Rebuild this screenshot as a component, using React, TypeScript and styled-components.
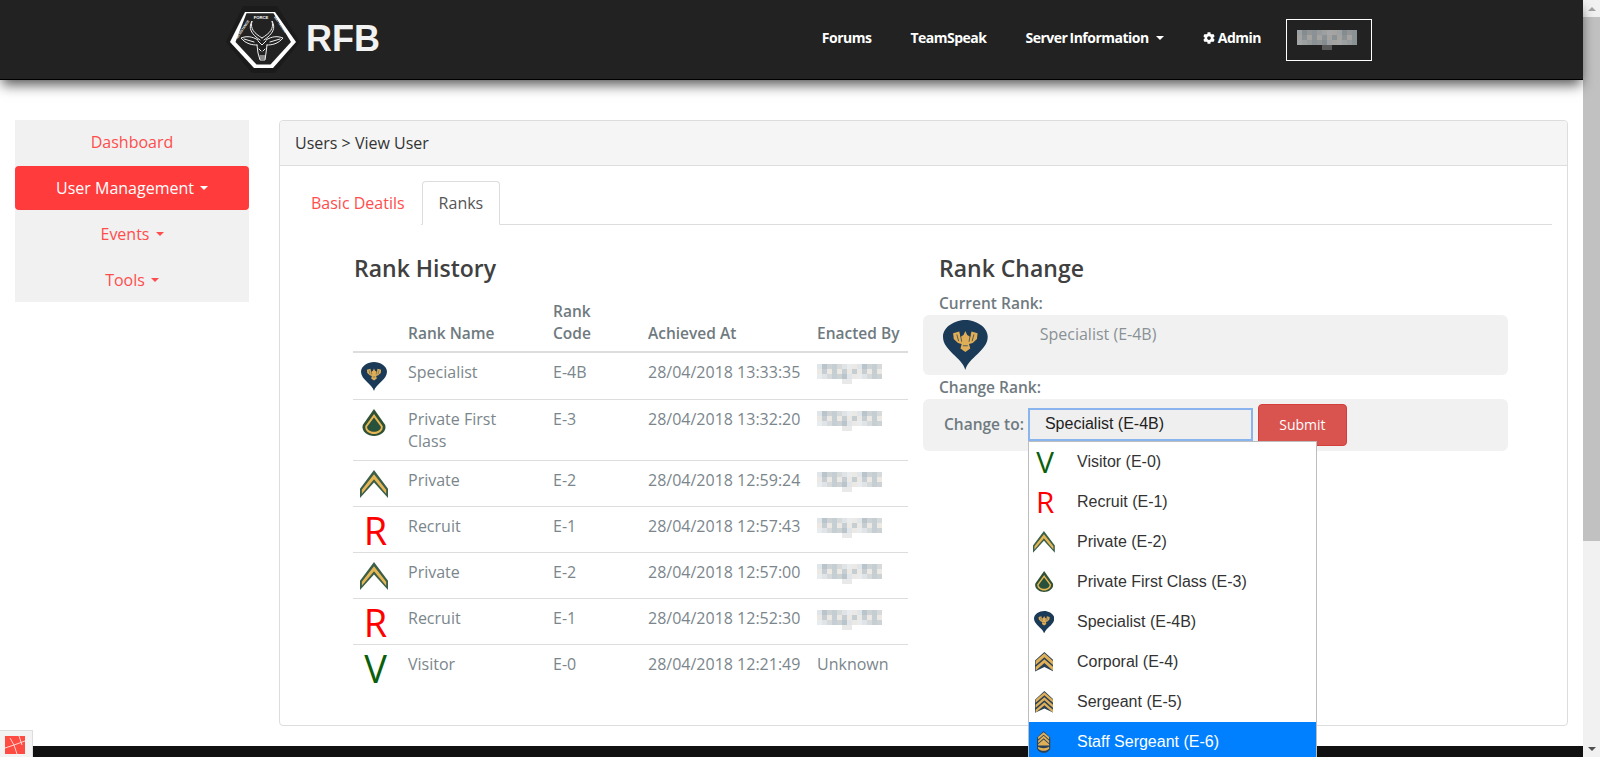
import React from 'react';
import styled, { createGlobalStyle } from 'styled-components';
import { FaCog } from 'react-icons/fa';

const GlobalStyle = createGlobalStyle`
  html, body {
    margin: 0;
    height: 757px;
    overflow: hidden;
    background: #fff;
  }

  * {
    box-sizing: border-box;
  }

  body {
    font-family: 'Open Sans', sans-serif;
    font-size: 15px;
    line-height: 22px;
    color: #333;
  }
`;

const Shell = styled.div`
  display: flex;
  height: 757px;
  overflow: hidden;
`;

const Page = styled.div`
  flex: 1;
  min-width: 0;
  display: flex;
  flex-direction: column;
`;

const Scrollbar = styled.div`
  flex: 0 0 17px;
  display: flex;
  flex-direction: column;
  align-items: center;
  background: #f1f1f1;
`;

const ScrollArrow = styled.div<{ $down?: boolean }>`
  flex: 0 0 17px;
  width: 17px;
  display: flex;
  align-items: center;
  justify-content: center;

  &::before {
    content: '';
    border-left: 4px solid transparent;
    border-right: 4px solid transparent;
    ${(p) => (p.$down ? 'border-top: 4px solid #505050;' : 'border-bottom: 4px solid #a3a3a3;')}
  }
`;

const ScrollThumb = styled.div`
  flex: 0 0 524px;
  width: 17px;
  background: #c1c1c1;
`;

const ScrollTrack = styled.div`
  flex: 1;
`;

const Navbar = styled.header`
  flex: 0 0 80px;
  display: flex;
  align-items: center;
  padding-left: 222px;
  padding-right: 211px;
  background: #222;
  border-bottom: 1px solid #000;
  box-shadow: 0 7px 12px -2px rgba(0, 0, 0, 0.65);
  position: relative;
  z-index: 2;
`;

const Brand = styled.a`
  display: flex;
  align-items: center;
  gap: 2px;
  font-family: 'Liberation Sans', Arial, sans-serif;
  font-size: 36px;
  font-weight: 700;
  color: #f2f2f2;
`;

const BrandName = styled.span`
  margin-top: -2px;
`;

const NavLinks = styled.nav`
  margin-left: auto;
  display: flex;
  align-items: center;
`;

const NavLink = styled.a`
  display: flex;
  align-items: center;
  gap: 3px;
  margin-left: 39px;
  padding-bottom: 3px;
  font-size: 14px;
  font-weight: 700;
  letter-spacing: -0.5px;
  word-spacing: -1px;
  color: #fff;
  white-space: nowrap;
`;

const NavCaret = styled.span`
  margin-left: 4px;
  border-left: 4px solid transparent;
  border-right: 4px solid transparent;
  border-top: 4px solid currentColor;
`;

const UserBox = styled.div`
  margin-left: 25px;
  width: 86px;
  height: 42px;
  padding-right: 4px;
  display: flex;
  align-items: center;
  justify-content: center;
  border: 1px solid #fff;
`;

const Content = styled.main`
  flex: 0 0 auto;
  display: flex;
  align-items: flex-start;
  gap: 30px;
  padding: 40px 15px 20px;
`;

const Sidebar = styled.aside`
  flex: 0 0 234px;
  height: 182px;
  background: #f1f1f1;
`;

const SideItem = styled.a<{ $active?: boolean; $first?: boolean }>`
  display: flex;
  align-items: center;
  justify-content: center;
  gap: 2px;
  height: ${(p) => (p.$active ? '44px' : '46px')};
  margin: ${(p) => (p.$active ? '0 0 1px' : '0')};
  padding-bottom: ${(p) => (p.$first ? '2px' : '0')};
  border-radius: 4px;
  font-size: 16px;
  color: ${(p) => (p.$active ? '#fff' : '#ff4d4d')};
  background: ${(p) => (p.$active ? '#ff3b3b' : 'transparent')};
`;

const Panel = styled.section`
  flex: 1;
  height: 606px;
  border: 1px solid #ddd;
  border-radius: 4px;
  background: #fff;
`;

const PanelHeader = styled.div`
  height: 45px;
  padding: 0 15px;
  display: flex;
  align-items: center;
  font-size: 16px;
  background: #f5f5f5;
  border-bottom: 1px solid #ddd;
  border-radius: 4px 4px 0 0;
`;

const PanelBody = styled.div`
  padding: 15px;
`;

const Tabs = styled.div`
  display: flex;
  height: 44px;
  border-bottom: 1px solid #ddd;
`;

const Tab = styled.a<{ $active?: boolean }>`
  height: 44px;
  padding: 0 ${(p) => (p.$active ? '16px' : '15px')};
  display: flex;
  align-items: center;
  font-size: 16px;
  color: ${(p) => (p.$active ? '#555' : '#ff4d4d')};
  border: 1px solid ${(p) => (p.$active ? '#ddd' : 'transparent')};
  border-bottom-color: ${(p) => (p.$active ? '#fff' : 'transparent')};
  border-radius: 4px 4px 0 0;
  background: #fff;
  margin-right: 1px;
`;

const Columns = styled.div`
  display: flex;
  align-items: flex-start;
  padding: 21px 0 0 58px;
`;

const LeftColumn = styled.div`
  flex: 0 0 555px;
`;

const RightColumn = styled.div`
  flex: 0 0 585px;
  margin-left: 15px;
  position: relative;
`;

const Heading = styled.h3<{ $inset?: boolean }>`
  margin: 0;
  height: ${(p) => (p.$inset ? '45px' : '44px')};
  padding-left: ${(p) => (p.$inset ? '16px' : '1px')};
  font-size: 23px;
  line-height: 44px;
  font-weight: 600;
  color: #404040;
`;

const RankTable = styled.table`
  width: 555px;
  border-collapse: collapse;
  table-layout: fixed;
  margin-top: 2px;

  tbody tr:first-child td {
    height: 47px;
  }
`;

const Th = styled.th<{ $w: number }>`
  width: ${(p) => p.$w}px;
  padding: 8px 0 7px;
  text-align: left;
  vertical-align: bottom;
  font-size: 15.5px;
  font-weight: 600;
  color: #6f7a80;
  border-bottom: 2px solid #ddd;
`;

const Td = styled.td`
  height: 46px;
  padding: 8px 0;
  vertical-align: top;
  font-size: 16px;
  color: #7b868c;
  border-top: 1px solid #ddd;
  white-space: nowrap;
`;

const WrapTd = styled(Td)`
  white-space: normal;
  padding-right: 30px;
`;

const IconTd = styled(Td)`
  padding: 3px 0 0;
`;

const IconSlot = styled.div`
  width: 42px;
  height: 40px;
  display: flex;
  align-items: center;
  justify-content: center;
`;

const BlurSlot = styled.div`
  padding-top: 3px;
  display: flex;
`;

const Label = styled.div`
  padding-left: 16px;
  font-size: 15.5px;
  font-weight: 600;
  line-height: 24px;
  color: #6f7a80;
`;

const CurrentBox = styled.div`
  height: 60px;
  display: flex;
  align-items: flex-start;
  padding: 5px 0 0 20px;
  background: #f1f1f1;
  border-radius: 6px;
`;

const CurrentName = styled.div`
  margin-left: 52px;
  margin-top: 3px;
  font-size: 16px;
  color: #8a9196;
`;

const ChangeBox = styled.div`
  height: 52px;
  display: flex;
  align-items: center;
  padding: 0 0 2px 21px;
  background: #f1f1f1;
  border-radius: 6px;
`;

const ChangeLabel = styled.div`
  font-size: 15.5px;
  font-weight: 600;
  color: #6f7a80;
  white-space: nowrap;
`;

const SelectBox = styled.div`
  width: 225px;
  height: 33px;
  margin-left: 4px;
  padding-left: 15px;
  display: flex;
  align-items: center;
  font-family: 'Liberation Sans', Arial, sans-serif;
  font-size: 16px;
  color: #222;
  background: #efefef;
  border: 2px solid #8ab4ee;
`;

const SubmitButton = styled.button`
  width: 89px;
  height: 42px;
  margin: 2px 0 0 5px;
  padding: 0 0 2px;
  font-family: 'Open Sans', sans-serif;
  font-size: 14px;
  color: #fff;
  background: #d9534f;
  border: 1px solid #d43f3a;
  border-radius: 4px;
`;

const Dropdown = styled.ul`
  position: absolute;
  left: 105px;
  top: 195px;
  width: 289px;
  height: 331px;
  margin: 0;
  padding: 0;
  list-style: none;
  overflow: hidden;
  background: #fff;
  border: 1px solid #bdbdbd;
  border-bottom: 0;
  z-index: 3;
`;

const Option = styled.li<{ $selected?: boolean }>`
  height: 40px;
  display: flex;
  align-items: center;
  padding-left: 1px;
  font-family: 'Liberation Sans', Arial, sans-serif;
  font-size: 16px;
  color: ${(p) => (p.$selected ? '#fff' : '#333')};
  background: ${(p) => (p.$selected ? '#0080ff' : 'transparent')};
`;

const OptionIcon = styled.div`
  flex: 0 0 47px;
  height: 34px;
  display: flex;
  align-items: center;
  justify-content: center;
  padding-right: 19px;
`;

const Footer = styled.footer`
  flex: 1;
  background: #111;
`;

const LaravelBadge = styled.div`
  position: fixed;
  left: 0;
  bottom: 0;
  width: 33px;
  height: 27px;
  padding: 4px 0 0 5px;
  background: #f3f3f3;
  border-top: 1px solid #ddd;
  border-right: 1px solid #ddd;
  z-index: 4;
`;

const Letter = styled.span<{ $color: string; $size: number; $nudge: number }>`
  margin-left: ${(p) => p.$nudge}px;
  font-family: 'Open Sans', sans-serif;
  font-size: ${(p) => p.$size}px;
  line-height: 1;
  color: ${(p) => p.$color};
`;

type RankKind = 'V' | 'R' | 'E2' | 'E3' | 'E4B' | 'E4' | 'E5' | 'E6';

const chevron = (y: number, h = 10) =>
  `M1 ${y + 12} L15 ${y} L29 ${y + 12} V${y + 12 + h} L15 ${y + h} L1 ${y + 12 + h} Z`;

// size of each badge at scale 1 (the table), and the part of the 30x36 box it fills
const badgeBox: Record<string, { w: number; h: number; view: string }> = {
  E2: { w: 28, h: 28, view: '0 6 30 27' },
  E3: { w: 26, h: 27, view: '0 1 30 32' },
  E4B: { w: 26, h: 29, view: '0 0 30 36' },
  E4: { w: 24, h: 25, view: '0 3 30 30' },
  E5: { w: 24, h: 28, view: '0 0 30 35' },
  E6: { w: 17, h: 28, view: '3 0 24 36' },
};

const Badge: React.FC<{ kind: RankKind; scale: number }> = ({ kind, scale }) => {
  if (kind === 'V') return <Letter $color="#0b5f0b" $size={38 * scale} $nudge={3 * scale}>V</Letter>;
  if (kind === 'R') return <Letter $color="#ff0000" $size={38 * scale} $nudge={3 * scale}>R</Letter>;

  const box = badgeBox[kind];
  const svgProps = {
    width: box.w * scale,
    height: box.h * scale,
    viewBox: box.view,
    preserveAspectRatio: 'none',
  };

  if (kind === 'E3') {
    return (
      <svg {...svgProps}>
        <path d="M15 1 L28 20 C30 28 22 33 15 33 C8 33 0 28 2 20 Z" fill="#2f5136" />
        <path d="M15 7 L25 21 C26 27 20 30.5 15 30.5 C10 30.5 4 27 5 21 Z" fill="#e8b755" />
        <path d="M15 11 L23 22 C23 26 19 28 15 28 C11 28 7 26 7 22 Z" fill="#27513a" />
      </svg>
    );
  }

  if (kind === 'E4B') {
    return (
      <svg {...svgProps}>
        <path d="M15 36 C13 27 0 22 0 12 C0 5 8 0 15 0 C22 0 30 5 30 12 C30 22 17 27 15 36 Z" fill="#1b3a57" />
        <g transform="translate(15 3) scale(.82) translate(-15 0)">
          <path d="M15 6 L16.5 9.5 L19 11 L20 6.5 L25 8 L24.5 13 L21 16.5 L18 17.5 L19 21.5 L15 24.5 L11 21.5 L12 17.5 L9 16.5 L5.5 13 L5 8 L10 6.5 L11 11 L13.5 9.5 Z" fill="#dfae57" />
          <path d="M8 9 L9.5 15 M11 9.5 L12 15.5 M22 9 L20.5 15 M19 9.5 L18 15.5 M13 19 H17" stroke="#1b3a57" strokeWidth="0.6" fill="none" />
        </g>
      </svg>
    );
  }

  if (kind === 'E2') {
    return (
      <svg {...svgProps}>
        <path d="M15 6 L30 24 V33 L15 18 L0 33 V24 Z" fill="#3c5f49" />
        <path d="M15 10 L28 25 V29 L15 15 L2 29 V25 Z" fill="#e8b755" />
      </svg>
    );
  }

  if (kind === 'E6') {
    return (
      <svg {...svgProps}>
        <path d="M15 0 L27 11 V28 C27 32 21 36 15 36 C9 36 3 32 3 28 V11 Z" fill="#2b4156" />
        <path d="M5 10 L15 2 L25 10 V14 L15 6 L5 14 Z M5 16 L15 8 L25 16 V20 L15 12 L5 20 Z M5 22 L15 14 L25 22 V24 L5 24 Z" fill="#e0b058" />
        <path d="M5 26 C9 29 21 29 25 26 V29 C21 34 9 34 5 29 Z" fill="#e0b058" />
      </svg>
    );
  }

  const stripes = kind === 'E4' ? [5, 14] : [2, 10, 18];
  return (
    <svg {...svgProps}>
      <path d={kind === 'E4' ? 'M15 3 L30 16 V33 L15 26 L0 33 V16 Z' : 'M15 0 L30 14 V35 L15 28 L0 35 V14 Z'} fill="#2b4156" />
      {stripes.map((y) => (
        <path key={y} d={chevron(y, kind === 'E4' ? 6 : 5)} fill="#e0b058" />
      ))}
    </svg>
  );
};

// the blurred-out user names
const blurShades = ['#dfe5e8', '#c4ced3', '#e8ecee', '#b9c5cb', '#d6dadb', '#ece8e3', '#cdd3d5', '#e0e4e6'];

const BlurName: React.FC<{ dark?: boolean }> = ({ dark }) => {
  const cell = 5;
  const cols = dark ? 12 : 13;
  const cells = [];
  for (let y = 0; y < 3; y++) {
    for (let x = 0; x < cols; x++) {
      const shade = blurShades[(x * 3 + y * 5 + x * y) % blurShades.length];
      cells.push(<rect key={`${x}-${y}`} x={x * cell} y={y * cell} width={cell} height={cell} fill={shade} />);
    }
  }
  return (
    <svg width={cols * cell} height={20} viewBox={`0 0 ${cols * cell} 20`} style={dark ? { opacity: 0.65 } : undefined}>
      {cells}
      <rect x="25" y="15" width="10" height="5" fill={dark ? '#777' : '#e9e9e9'} />
    </svg>
  );
};

// viewBox is in page pixels, so the points read straight off the reference
const Logo: React.FC = () => (
  <svg width={82} height={72} viewBox="222 4 82 72">
    <path d="M243 6 H277 L300 42 L275 73 H252 L226 42 Z" fill="#1b1b1b" />
    <path d="M245 12 H275 L296 42 L273 68 H254 L230 42 Z" fill="#fff" />
    <path d="M246.5 13.2 H273.5 L291 42 L270.5 64.5 H256.5 L235.5 42 Z" fill="#222" />
    <g fill="#fff" fontFamily="'Liberation Sans', sans-serif" fontWeight="700">
      <text x="261" y="18.5" fontSize="4.2" textAnchor="middle">FORCE</text>
      <text transform="translate(237.5 39) rotate(-56)" fontSize="3.4">RESISTANCE</text>
      <text transform="translate(274 17) rotate(56)" fontSize="3.4">BATTALION</text>
    </g>
    <g fill="none" stroke="#f0f0f0" strokeWidth="1" strokeLinecap="round" strokeLinejoin="round">
      <path d="M260 40 C251 34 248 28 252 21 C250 29 254 33 262 38" />
      <path d="M264 40 C273 34 276 28 272 21 C274 29 270 33 262 38" />
      <path d="M258 40 C252 36 246 36 241 38 C246 44 252 45 257 45" />
      <path d="M266 40 C272 36 278 36 283 38 C278 44 272 45 267 45" />
      <path d="M257 45 L258 53 L260 60 H265 L266 53 L267 45" />
      <path d="M258 41 L262 45 L266 41 M259 49 L261 51 M265 49 L263 51 M260 56 H265 M260 58 H265" />
      <path d="M244 39 L254 42 M280 39 L270 42" />
    </g>
  </svg>
);

const LaravelMark: React.FC = () => (
  <svg width={21} height={20} viewBox="0 0 21 20">
    <path d="M0 1 H20 V19 H0 Z" fill="#ff4b42" />
    <path d="M0 13 L9 10 L12 19 M9 10 L20 6 M14 1 L17 10 M5 3 L9 10" stroke="#fbe3e0" strokeWidth="0.9" fill="none" />
  </svg>
);

const history: { kind: RankKind; name: string; code: string; at: string; by?: string }[] = [
  { kind: 'E4B', name: 'Specialist', code: 'E-4B', at: '28/04/2018 13:33:35' },
  { kind: 'E3', name: 'Private First Class', code: 'E-3', at: '28/04/2018 13:32:20' },
  { kind: 'E2', name: 'Private', code: 'E-2', at: '28/04/2018 12:59:24' },
  { kind: 'R', name: 'Recruit', code: 'E-1', at: '28/04/2018 12:57:43' },
  { kind: 'E2', name: 'Private', code: 'E-2', at: '28/04/2018 12:57:00' },
  { kind: 'R', name: 'Recruit', code: 'E-1', at: '28/04/2018 12:52:30' },
  { kind: 'V', name: 'Visitor', code: 'E-0', at: '28/04/2018 12:21:49', by: 'Unknown' },
];

const options: { kind: RankKind; label: string }[] = [
  { kind: 'V', label: 'Visitor (E-0)' },
  { kind: 'R', label: 'Recruit (E-1)' },
  { kind: 'E2', label: 'Private (E-2)' },
  { kind: 'E3', label: 'Private First Class (E-3)' },
  { kind: 'E4B', label: 'Specialist (E-4B)' },
  { kind: 'E4', label: 'Corporal (E-4)' },
  { kind: 'E5', label: 'Sergeant (E-5)' },
  { kind: 'E6', label: 'Staff Sergeant (E-6)' },
];

const App: React.FC = () => {
  return (
    <Shell>
      <GlobalStyle />
      <Page>
        <Navbar>
          <Brand>
            <Logo />
            <BrandName>RFB</BrandName>
          </Brand>
          <NavLinks>
            <NavLink>Forums</NavLink>
            <NavLink>TeamSpeak</NavLink>
            <NavLink>
              Server Information
              <NavCaret />
            </NavLink>
            <NavLink>
              <FaCog size={12} />
              Admin
            </NavLink>
            <UserBox>
              <BlurName dark />
            </UserBox>
          </NavLinks>
        </Navbar>

        <Content>
          <Sidebar>
            <SideItem $first>Dashboard</SideItem>
            <SideItem $active>
              User Management
              <NavCaret />
            </SideItem>
            <SideItem>
              Events
              <NavCaret />
            </SideItem>
            <SideItem>
              Tools
              <NavCaret />
            </SideItem>
          </Sidebar>

          <Panel>
            <PanelHeader>Users &gt; View User</PanelHeader>
            <PanelBody>
              <Tabs>
                <Tab>Basic Deatils</Tab>
                <Tab $active>Ranks</Tab>
              </Tabs>
              <Columns>
                <LeftColumn>
                  <Heading>Rank History</Heading>
                  <RankTable>
                    <thead>
                      <tr>
                        <Th $w={55} />
                        <Th $w={145}>Rank Name</Th>
                        <Th $w={95}>
                          Rank
                          <br />
                          Code
                        </Th>
                        <Th $w={169}>Achieved At</Th>
                        <Th $w={91}>Enacted By</Th>
                      </tr>
                    </thead>
                    <tbody>
                      {history.map((row) => (
                        <tr key={row.at}>
                          <IconTd>
                            <IconSlot>
                              <Badge kind={row.kind} scale={1} />
                            </IconSlot>
                          </IconTd>
                          <WrapTd>{row.name}</WrapTd>
                          <Td>{row.code}</Td>
                          <Td>{row.at}</Td>
                          <Td>
                            {row.by ?? (
                              <BlurSlot>
                                <BlurName />
                              </BlurSlot>
                            )}
                          </Td>
                        </tr>
                      ))}
                    </tbody>
                  </RankTable>
                </LeftColumn>

                <RightColumn>
                  <Heading $inset>Rank Change</Heading>
                  <Label>Current Rank:</Label>
                  <CurrentBox>
                    <Badge kind="E4B" scale={1.72} />
                    <CurrentName>Specialist (E-4B)</CurrentName>
                  </CurrentBox>
                  <Label>Change Rank:</Label>
                  <ChangeBox>
                    <ChangeLabel>Change to:</ChangeLabel>
                    <SelectBox>Specialist (E-4B)</SelectBox>
                    <SubmitButton>Submit</SubmitButton>
                  </ChangeBox>
                  <Dropdown>
                    {options.map((o) => (
                      <Option key={o.label} $selected={o.kind === 'E6'}>
                        <OptionIcon>
                          <Badge kind={o.kind} scale={0.78} />
                        </OptionIcon>
                        {o.label}
                      </Option>
                    ))}
                  </Dropdown>
                </RightColumn>
              </Columns>
            </PanelBody>
          </Panel>
        </Content>

        <Footer />
      </Page>
      <Scrollbar>
        <ScrollArrow />
        <ScrollThumb />
        <ScrollTrack />
        <ScrollArrow $down />
      </Scrollbar>
      <LaravelBadge>
        <LaravelMark />
      </LaravelBadge>
    </Shell>
  );
};

export default App;
